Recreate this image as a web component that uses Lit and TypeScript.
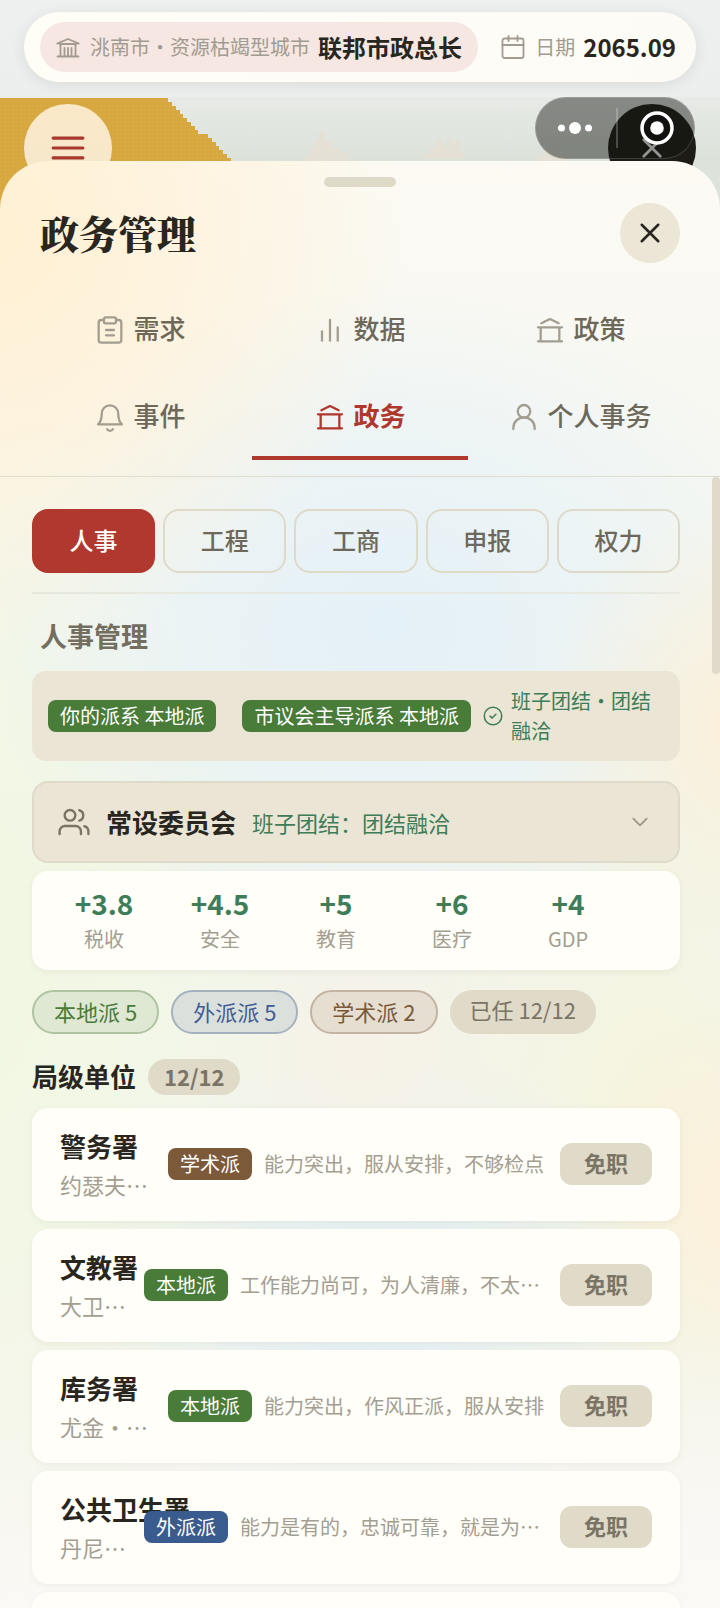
import { LitElement, html, css, svg, nothing } from "lit";
import { customElement, state } from "lit/decorators.js";
import { classMap } from "lit/directives/class-map.js";

const shapes = {
  museum: svg`<path d="M1.200 8.500 12 4l10.800 4.500M3.500 9h17M1.500 21.500h21M4.500 9.500v12M8.500 13v8M12 13v8M15.500 13v8M19.500 9.500v12"/>`,
  calendar: svg`<rect x="1.500" y="3.500" width="21" height="19.500" rx="2"/><path d="M1.500 10h21M7.500 1v5M16.500 1v5"/>`,
  clipboard: svg`<path d="M7.500 4.500H5.500a2 2 0 0 0-2 2v13a2 2 0 0 0 2 2h13a2 2 0 0 0 2-2v-13a2 2 0 0 0-2-2h-2"/><rect x="7.500" y="2.500" width="9" height="4.500" rx="1.200"/><path d="M9 12h6M9 16h6"/>`,
  chart: svg`<path d="M6 13v7M12 4.500v15.500M17.800 10v10"/>`,
  hall: svg`<path d="M5.500 7 12 3.800 18.500 7M3 10h18M3 20.500h18M5 10v10.500M19 10v10.500"/>`,
  bell: svg`<path d="M3 17.500h18c-2.200-2-2.800-4-2.800-8a6.200 6.200 0 0 0-12.400 0c0 4-.6 6-2.800 8ZM9.800 21.200a2.600 2.600 0 0 0 4.400 0"/>`,
  user: svg`<circle cx="12" cy="7.700" r="4.700"/><path d="M4 21v-.800a8 8 0 0 1 16 0v.8"/>`,
  users: svg`<circle cx="9" cy="7" r="4"/><path d="M1.200 21v-2a4 4 0 0 1 4-4h8a4 4 0 0 1 4 4v2M16 3.200a4 4 0 0 1 0 7.700M22.800 21v-2a4 4 0 0 0-3-3.800"/>`,
  check: svg`<circle cx="12" cy="12" r="10.500"/><path d="m8.500 12.200 2.500 2.300 4.500-4.500"/>`,
  chevron: svg`<path d="m4 8 8 8 8-8"/>`,
  close: svg`<path d="M3 3l18 18M21 3 3 21"/>`,
  menu: svg`<path d="M1.500 5h21M1.500 12h21M1.500 19h21"/>`,
};

type Icon = keyof typeof shapes;
const icon = (name: Icon, cls = "") =>
  html`<svg class="icon ${cls}" viewBox="0 0 24 24" aria-hidden="true">${shapes[name]}</svg>`;

const tabs: { label: string; icon: Icon }[] = [
  { label: "需求", icon: "clipboard" },
  { label: "数据", icon: "chart" },
  { label: "政策", icon: "hall" },
  { label: "事件", icon: "bell" },
  { label: "政务", icon: "hall" },
  { label: "个人事务", icon: "user" },
];

const sections = ["人事", "工程", "工商", "申报", "权力"];

const stats = [
  ["+3.8", "税收"],
  ["+4.5", "安全"],
  ["+5", "教育"],
  ["+6", "医疗"],
  ["+4", "GDP"],
];

type Faction = "local" | "outside" | "academic";
const factionNames: Record<Faction, string> = {
  local: "本地派",
  outside: "外派派",
  academic: "学术派",
};
const factionCounts: [Faction, number][] = [
  ["local", 5],
  ["outside", 5],
  ["academic", 2],
];

const bureaus: { name: string; head: string; faction: Faction; note: string; cut?: boolean }[] = [
  { name: "警务署", head: "约瑟夫…", faction: "academic", note: "能力突出，服从安排，不够检点" },
  { name: "文教署", head: "大卫…", faction: "local", note: "工作能力尚可，为人清廉，不太…", cut: true },
  { name: "库务署", head: "尤金・…", faction: "local", note: "能力突出，作风正派，服从安排" },
  { name: "公共卫生署", head: "丹尼…", faction: "outside", note: "能力是有的，忠诚可靠，就是为…", cut: true },
];

@customElement("app-root")
export class AppRoot extends LitElement {
  @state() private tab = "政务";
  @state() private section = "人事";

  static styles = css`
    :host {
      display: flex;
      flex-direction: column;
      position: relative;
      height: 100vh;
      overflow: hidden;
      background: linear-gradient(#eef1f0, #eceeee 98px, #e3e7df 98px);
      color: #292620;
      font-family: "Noto Sans CJK SC", sans-serif;
      font-size: 20px;
      line-height: 30px;
    }
    * { box-sizing: border-box; }
    button { font: inherit; color: inherit; border: 0; margin: 0; padding: 0; background: none; cursor: pointer; }
    h1, h2, h3, p { margin: 0; }
    .icon {
      display: block;
      flex: none;
      fill: none;
      stroke: currentColor;
      stroke-width: 1.8;
      stroke-linecap: round;
      stroke-linejoin: round;
    }
    .s20 { width: 20px; height: 20px; }
    .s24 { width: 24px; height: 24px; }
    .s32 { width: 32px; height: 32px; }

    .status {
      position: relative;
      display: flex;
      align-items: center;
      justify-content: space-between;
      margin: 12px 24px 0;
      padding: 10px 20px 10px 16px;
      border-radius: 35px;
      background: linear-gradient(90deg, #fefdf6, #fdfbf6);
      box-shadow: 0 2px 14px rgba(60, 60, 50, 0.11);
      color: #a29b90;
      white-space: nowrap;
    }
    .city, .date { display: flex; align-items: center; gap: 8px; }
    .city { height: 50px; padding: 0 16px; border-radius: 25px; background: #f6e7e3; }
    .city .icon, .date .icon { margin-right: 2px; }
    .status strong { font-size: 24px; color: #292620; }

    .map { position: absolute; top: 97px; left: 0; width: 720px; height: 140px; }
    .float { position: absolute; top: 104px; width: 88px; height: 88px; border-radius: 50%; display: grid; place-items: center; }
    .menu { left: 24px; background: linear-gradient(#fae8c8, #f6e7cc); color: #a8372c; }
    .menu .icon { width: 36px; height: 34px; stroke-width: 2.2; }
    .exit { right: 24px; background: #1d1b16; color: #fff; }
    .exit .icon { width: 22px; height: 22px; stroke-width: 3; }
    .capsule {
      position: absolute;
      top: 97px;
      right: 25px;
      width: 160px;
      height: 62px;
      border-radius: 31px;
      background: rgba(20, 22, 18, 0.46);
      border: 1px solid rgba(255, 255, 255, 0.16);
      display: grid;
      grid-template-columns: 1fr 1fr;
    }
    .capsule button { display: grid; place-items: center; }
    .capsule svg { width: 78px; height: 60px; display: block; }

    .sheet {
      position: relative;
      flex: 1;
      min-height: 0;
      display: flex;
      flex-direction: column;
      margin-top: 79px;
      border-radius: 48px 48px 0 0;
      overflow: hidden;
      background:
        radial-gradient(420px 420px at -2% 5%, #fff0d2 0%, rgba(255, 241, 216, 0.75) 45%, rgba(255, 244, 222, 0) 100%),
        radial-gradient(220px 220px at 104% 39%, #fbefd8 0%, rgba(250, 240, 216, 0) 100%),
        radial-gradient(160px 200px at 102% 72%, #fcf0da 0%, rgba(250, 242, 216, 0) 100%),
        radial-gradient(420px 340px at 54% 32%, #e5f1f8 0%, rgba(231, 242, 247, 0.75) 45%, rgba(234, 243, 246, 0) 100%),
        radial-gradient(340px 640px at -4% 56%, #f2f7e2 0%, rgba(243, 247, 229, 0.8) 50%, rgba(245, 247, 230, 0) 100%),
        radial-gradient(200px 200px at 50% 62%, #f6f1e6 0%, rgba(246, 241, 230, 0) 100%),
        radial-gradient(300px 240px at 52% 77%, #e2eff5 0%, rgba(228, 240, 245, 0) 100%),
        radial-gradient(260px 400px at 90% 65%, #f5f4de 0%, rgba(244, 245, 224, 0) 100%),
        linear-gradient(#fcfaf3 0%, #f8f8f2 15%, #f0f5ee 45%, #f4f6ee 80%, #fbf9f5 97%);
    }
    .grip { width: 72px; height: 10px; margin: 16px auto 0; border-radius: 5px; background: #dfdac8; flex: none; }
    .title { display: flex; align-items: center; justify-content: space-between; padding: 16px 40px 27px; }
    .title h1 { padding-bottom: 2px; font: 900 39px/58px "Noto Serif CJK SC", "Noto Serif SC", "Source Han Serif SC", serif; }
    .close { width: 60px; height: 60px; border-radius: 50%; background: #ebe6d6; display: grid; place-items: center; }
    .close .icon { width: 22px; height: 22px; stroke-width: 2.8; }

    .tabs {
      display: grid;
      grid-template-columns: repeat(3, 1fr);
      gap: 4px;
      padding: 0 32px 16px;
      border-bottom: 1px solid #dedccf;
    }
    .tab {
      display: flex;
      align-items: center;
      justify-content: center;
      gap: 7px;
      height: 83px;
      border-bottom: 4px solid transparent;
      font-size: 26px;
      font-weight: 500;
      color: #6d685a;
    }
    .tab span { padding-bottom: 3px; }
    .tab .icon { color: #a29d90; stroke-width: 1.7; }
    .tab.on, .tab.on .icon { color: #b0372d; }
    .tab.on { font-weight: 700; border-color: #b0392e; }

    .body { position: relative; flex: 1; min-height: 0; overflow: hidden; padding: 32px 40px 0 32px; }
    .thumb { position: absolute; top: 0; right: 0; width: 8px; height: 197px; border-radius: 4px; background: #dfdac9; }
    .sections { display: grid; grid-template-columns: repeat(5, 1fr); gap: 8px; padding-bottom: 19px; border-bottom: 2px solid #e8e9de; }
    .section { height: 64px; padding-bottom: 3px; border: 2px solid #dfdac8; border-radius: 16px; font-size: 24px; font-weight: 500; color: #6d685a; }
    .section.on { background: #b0382e; border-color: #b0382e; color: #fff; }
    h2 { padding: 22px 8px 15px; font-size: 27px; line-height: 40px; color: #746e60; }

    .unity { display: flex; align-items: center; gap: 12px; padding: 15px 16px; border-radius: 14px; background: #ebe5d5; }
    .tag { flex: none; padding: 0 12px; border-radius: 8px; line-height: 32px; color: #fff; white-space: nowrap; }
    .unity .tag + .tag { margin-left: 14px; }
    .mood { display: flex; align-items: center; gap: 8px; color: #3e7d58; }
    .local { background: #497b39; }
    .outside { background: #3a5b8d; }
    .academic { background: #7b5939; }

    .committee {
      display: flex;
      align-items: center;
      gap: 16px;
      width: 100%;
      height: 82px;
      margin-top: 20px;
      padding: 0 24px;
      border: 2px solid #dfdac9;
      border-radius: 16px;
      background: #ebe5d5;
      text-align: left;
    }
    .committee strong { font-size: 26px; }
    .committee span { flex: 1; font-size: 22px; color: #3e7d58; }
    .committee .icon { color: #7a7465; }
    .committee .s24 { width: 20px; margin-right: 4px; stroke-width: 2.2; color: #9c9585; }

    .panel { border-radius: 16px; background: #fffef9; box-shadow: 0 2px 6px rgba(90, 90, 60, 0.07); }
    .stats { display: grid; grid-template-columns: repeat(5, 1fr); margin-top: 8px; padding: 13px 54px 14px 14px; text-align: center; }
    .stats strong { display: block; font-size: 28px; line-height: 38px; color: #3e7d58; }
    .stats span { display: block; line-height: 34px; color: #a39e91; }

    .factions { display: flex; gap: 12px; margin-top: 20px; font-size: 22px; line-height: 32px; }
    .pill { padding: 3px 20px 5px; border: 2px solid; border-radius: 22px; }
    .pill.local { color: #497b39; background: #dee8d2; border-color: #aec3a1; }
    .pill.outside { color: #3f5c94; background: #dbe0dd; border-color: #a5b2bd; }
    .pill.academic { color: #7b5939; background: #e6dfd1; border-color: #c2b3a2; }
    .pill.filled { border: 0; background: #e0dac9; color: #7a7466; }

    .group { display: flex; align-items: center; gap: 12px; margin: 25px 0 13px; }
    .group h3 { font-size: 26px; line-height: 34px; padding-bottom: 2px; }
    .group span { padding: 0 16px 2px; border-radius: 18px; background: #e0dac9; font-size: 22px; font-weight: 700; line-height: 34px; color: #7a7466; }

    .list { display: grid; gap: 8px; }
    .bureau { display: flex; align-items: center; min-height: 113px; padding: 19px 28px 21px; white-space: nowrap; }
    .who { flex: 1 1 0; min-width: 72px; width: 0; margin-right: 12px; }
    .who strong { display: block; font-size: 26px; line-height: 38px; }
    .who span { display: block; margin-top: 4px; font-size: 22px; line-height: 31px; color: #a39e91; }
    .note { margin-left: 12px; color: #a39e91; min-width: 0; overflow: hidden; text-overflow: ellipsis; }
    .note.cut { width: 304px; }
    .dismiss { flex: none; height: 42px; margin-left: 16px; padding: 0 24px 3px; border-radius: 12px; background: #e0dac9; color: #7a7466; font-size: 22px; font-weight: 700; line-height: 38px; }
  `;

  private renderMap() {
    // Coastline falls away in square steps, with one wider ledge halfway down.
    let edge = "M0 1H168";
    let x = 168;
    for (let i = 0; i < 16; i++) {
      edge += `v4h${i === 8 ? 10 : i % 4 === 3 ? 3 : 4}`;
      x += 4;
    }
    return html`<svg class="map" viewBox="0 0 720 140" aria-hidden="true">
      <defs>
        <pattern id="grain" width="4" height="4" patternUnits="userSpaceOnUse">
          <rect width="4" height="4" fill="#d7a840" /><rect width="2" height="2" fill="#d9ab44" />
        </pattern>
        <linearGradient id="sea" x2="0" y2="1">
          <stop offset="0" stop-color="#e7eae6" /><stop offset=".45" stop-color="#dce2da" /><stop offset="1" stop-color="#e3e6dc" />
        </linearGradient>
      </defs>
      <rect width="720" height="140" fill="url(#sea)" />
      <path d="${edge}V140H0Z" fill="url(#grain)" />
      <path d="M304 64v-5h6v-8h5v-8h4v-8h6v9h7v7h8v5h8v8ZM424 62v-6h6v-5h6v-9h5v6h6v-6h5v6h3v-6h5v13h4v7ZM538 64v-6h7v-5h14v5h8v6Z" fill="#e4e0d5" />
    </svg>`;
  }

  render() {
    return html`
      ${this.renderMap()}
      <header class="status">
        <div class="city">${icon("museum", "s24")}<span>洮南市・资源枯竭型城市</span><strong>联邦市政总长</strong></div>
        <div class="date">${icon("calendar", "s24")}<span>日期</span><strong>2065.09</strong></div>
      </header>
      <button class="float menu" aria-label="菜单">${icon("menu")}</button>
      <button class="float exit" aria-label="退出">${icon("close")}</button>
      <div class="capsule">
        <button aria-label="更多">
          <svg viewBox="0 0 78 60" fill="#fff"><circle cx="24.500" cy="30" r="3.500" /><circle cx="38" cy="30" r="6" /><circle cx="51.500" cy="30" r="3.500" /></svg>
        </button>
        <button aria-label="关闭小程序">
          <svg viewBox="0 0 78 60"><path d="M1 10v40" stroke="#fff" stroke-opacity=".3" stroke-width="1.500" /><circle cx="41" cy="30" r="15" fill="#12110f" stroke="#fff" stroke-width="3.500" /><circle cx="41" cy="30" r="6.800" fill="#fff" /></svg>
        </button>
      </div>

      <main class="sheet">
        <div class="grip"></div>
        <div class="title">
          <h1>政务管理</h1>
          <button class="close" aria-label="关闭">${icon("close")}</button>
        </div>
        <nav class="tabs">
          ${tabs.map(
            (t) => html`<button class=${classMap({ tab: true, on: t.label === this.tab })} @click=${() => (this.tab = t.label)}>
              ${icon(t.icon, "s32")}<span>${t.label}</span>
            </button>`
          )}
        </nav>
        <div class="body">
          <div class="thumb"></div>
          <div class="sections">
            ${sections.map(
              (s) => html`<button class=${classMap({ section: true, on: s === this.section })} @click=${() => (this.section = s)}>${s}</button>`
            )}
          </div>
          <h2>人事管理</h2>
          <div class="unity">
            <span class="tag local">你的派系 本地派</span>
            <span class="tag local">市议会主导派系 本地派</span>
            <div class="mood">${icon("check", "s20")}<span>班子团结・团结融洽</span></div>
          </div>
          <button class="committee">
            ${icon("users", "s32")}<strong>常设委员会</strong><span>班子团结：团结融洽</span>${icon("chevron", "s24")}
          </button>
          <div class="panel stats">
            ${stats.map(([value, label]) => html`<div><strong>${value}</strong><span>${label}</span></div>`)}
          </div>
          <div class="factions">
            ${factionCounts.map(([f, n]) => html`<span class="pill ${f}">${factionNames[f]} ${n}</span>`)}
            <span class="pill filled">已任 12/12</span>
          </div>
          <div class="group"><h3>局级单位</h3><span>12/12</span></div>
          <div class="list">
            ${bureaus.map(
              (b) => html`<article class="panel bureau">
                <div class="who"><strong>${b.name}</strong><span>${b.head}</span></div>
                <span class="tag ${b.faction}">${factionNames[b.faction]}</span>
                <span class=${classMap({ note: true, cut: !!b.cut })}>${b.note}</span>
                <button class="dismiss">免职</button>
              </article>`
            )}
            <article class="panel bureau">${nothing}</article>
          </div>
        </div>
      </main>
    `;
  }
}
